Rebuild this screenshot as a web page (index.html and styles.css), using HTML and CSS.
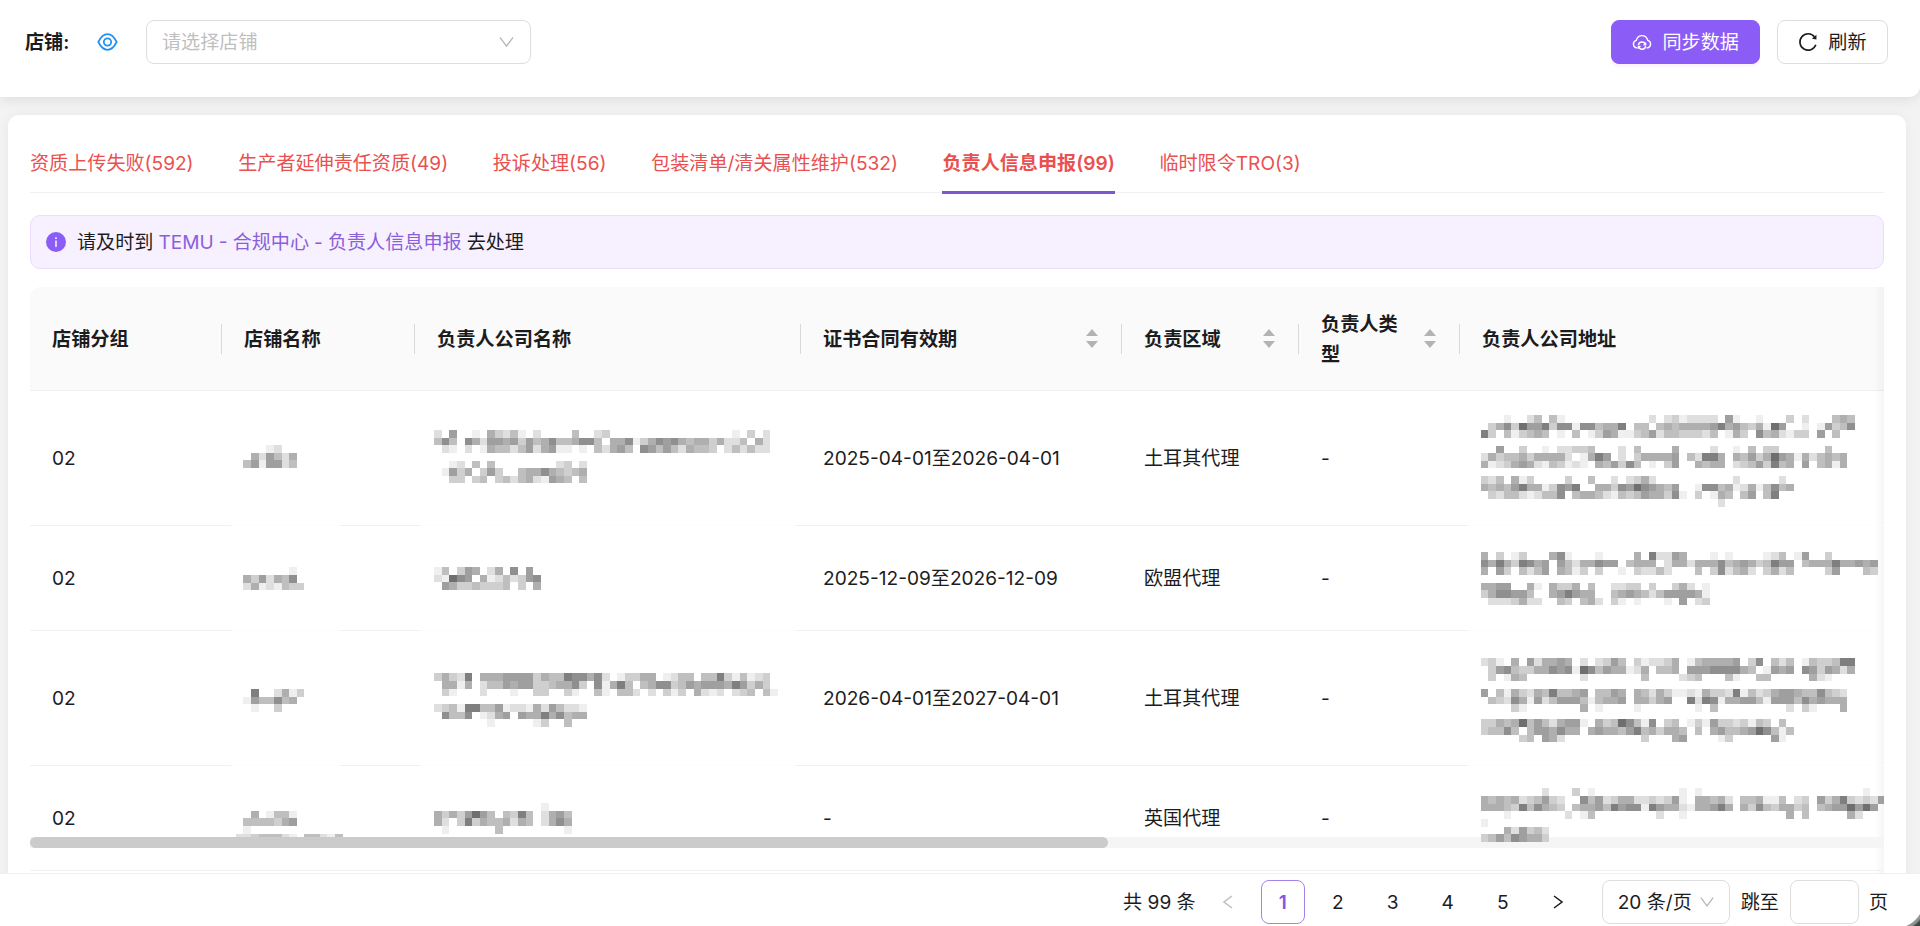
FILE: index.html
```html
<!DOCTYPE html>
<html lang="zh-CN">
<head>
    <meta charset="utf-8">
    <title>负责人信息申报</title>
    <link rel="stylesheet" href="styles.css">
</head>
<body>
    <div class="filter-bar">
        <label class="filter-label">店铺:</label>
        <svg class="eye" viewBox="0 0 24 24"><path d="M2 12C4.400 7.200 7.600 3.500 12 3.500S19.600 7.200 22 12C19.600 16.800 16.400 20.500 12 20.500S4.400 16.800 2 12Z"/><circle cx="12" cy="12" r="4"/></svg>
        <div class="select shop-select">
            <span>请选择店铺</span>
            <svg class="chevron" viewBox="0 0 16 12"><path d="M1 1l7 9.500L15 1"/></svg>
        </div>
        <div class="actions">
            <button class="btn btn-primary">
                <svg viewBox="0 0 22 20"><path d="M6 16.500H5.200A4.200 4.200 0 0 1 4.600 8.300C5.600 4.900 8 3 11 3s5.400 1.900 6.400 5.300a4.200 4.200 0 0 1-.6 8.200H16"/><path d="M7 13.500a4 4 0 0 1 7.800-.6M15 14.500a4 4 0 0 1-7.800.6M15 10.500v2.600h-2.500M7 17.500v-2.600h2.500"/></svg>
                <span>同步数据</span>
            </button>
            <button class="btn">
                <svg viewBox="0 0 22 22"><path d="M18.200 5.400A9 9 0 1 0 19.600 14"/><path class="solid" d="M20.300 3v5.200l-5-.8z"/></svg>
                <span>刷新</span>
            </button>
        </div>
    </div>

    <div class="card">
        <div class="tabs">
            <div class="tab">资质上传失败(592)</div>
            <div class="tab">生产者延伸责任资质(49)</div>
            <div class="tab">投诉处理(56)</div>
            <div class="tab">包装清单/清关属性维护(532)</div>
            <div class="tab active">负责人信息申报(99)</div>
            <div class="tab">临时限令TRO(3)</div>
        </div>

        <div class="alert">
            <svg viewBox="0 0 20 20"><circle cx="10" cy="10" r="10"/><path d="M9.300 8.500h1.400v6.500H9.300zM9.200 5.200h1.600v1.700H9.200z"/></svg>
            <p>请及时到 <a>TEMU - 合规中心 - 负责人信息申报</a> 去处理</p>
        </div>

        <div class="table-wrap">
            <table>
                <colgroup>
                    <col class="w-group"><col class="w-shop"><col class="w-company"><col class="w-date"><col class="w-area"><col class="w-type"><col class="w-address">
                </colgroup>
                <thead>
                    <tr>
                        <th>店铺分组</th>
                        <th>店铺名称</th>
                        <th>负责人公司名称</th>
                        <th><div class="sortable"><span>证书合同有效期</span><i class="sorter"></i></div></th>
                        <th><div class="sortable"><span>负责区域</span><i class="sorter"></i></div></th>
                        <th><div class="sortable"><span>负责人类型</span><i class="sorter"></i></div></th>
                        <th>负责人公司地址</th>
                    </tr>
                </thead>
                <tbody>
                    <tr class="tall">
                        <td>02</td>
                        <td class="masked shop" data-mask="shop1"></td>
                        <td class="masked company" data-mask="company1"></td>
                        <td>2025-04-01至2026-04-01</td>
                        <td>土耳其代理</td>
                        <td>-</td>
                        <td class="masked address" data-mask="address1"></td>
                    </tr>
                    <tr>
                        <td>02</td>
                        <td class="masked shop" data-mask="shop2"></td>
                        <td class="masked company" data-mask="company2"></td>
                        <td>2025-12-09至2026-12-09</td>
                        <td>欧盟代理</td>
                        <td>-</td>
                        <td class="masked address" data-mask="address2"></td>
                    </tr>
                    <tr class="tall">
                        <td>02</td>
                        <td class="masked shop" data-mask="shop3"></td>
                        <td class="masked company" data-mask="company3"></td>
                        <td>2026-04-01至2027-04-01</td>
                        <td>土耳其代理</td>
                        <td>-</td>
                        <td class="masked address" data-mask="address3"></td>
                    </tr>
                    <tr class="last">
                        <td>02</td>
                        <td class="masked shop" data-mask="shop4"></td>
                        <td class="masked company" data-mask="company4"></td>
                        <td>-</td>
                        <td>英国代理</td>
                        <td>-</td>
                        <td class="masked address" data-mask="address4"></td>
                    </tr>
                </tbody>
            </table>
            <div class="scrollbar"><div class="thumb"></div></div>
        </div>
    </div>

    <div class="footer">
        <span class="total">共 99 条</span>
        <span class="page arrow disabled"><svg viewBox="0 0 10 14"><path d="M9 1L1 7l8 6"/></svg></span>
        <span class="page current">1</span>
        <span class="page">2</span>
        <span class="page">3</span>
        <span class="page">4</span>
        <span class="page">5</span>
        <span class="page arrow"><svg viewBox="0 0 10 14"><path d="M1 1l8 6-8 6"/></svg></span>
        <div class="select size-select">
            <span>20 条/页</span>
            <svg class="chevron" viewBox="0 0 16 12"><path d="M1 1l7 9.500L15 1"/></svg>
        </div>
        <span class="jump">跳至</span>
        <input class="jump-input" type="text">
        <span class="jump-end">页</span>
    </div>
    <div class="corner"></div>

    <script src="script.js"></script>
</body>
</html>
```
FILE: styles.css
```css
* {
    box-sizing: border-box;
}
body {
    margin: 0;
    height: 926px;
    overflow: hidden;
    position: relative;
    display: flex;
    flex-direction: column;
    background: #f3f3f3;
    color: #1c1c1e;
    font-family: Inter, "Noto Sans CJK SC", sans-serif;
    font-size: 19.1px;
    line-height: 30px;
}
svg {
    fill: none;
    stroke: currentColor;
    flex: none;
}
.filter-bar {
    flex: none;
    display: flex;
    align-items: flex-start;
    height: 97px;
    padding: 20px 32px 0 25px;
    background: #fff;
    border-radius: 0 0 11px 0;
    box-shadow: 0 2px 14px rgba(0, 0, 0, 0.1);
}
.filter-label {
    width: 71px;
    line-height: 44px;
    font-weight: 600;
}
.eye {
    width: 23px;
    height: 22px;
    margin: 11px 27px 0 0;
    color: #2490f0;
    stroke-width: 1.9;
}
.select {
    display: flex;
    align-items: center;
    justify-content: space-between;
    height: 44px;
    border: 1px solid #dedede;
    border-radius: 8px;
    background: #fff;
}
.shop-select {
    width: 385px;
    padding: 0 16px 0 15px;
    color: #bfbfbf;
}
.chevron {
    width: 15px;
    height: 12px;
    color: #b5b5b5;
    stroke-width: 1.4;
}
.actions {
    display: flex;
    gap: 17px;
    margin-left: auto;
}
.btn {
    display: flex;
    align-items: center;
    gap: 10px;
    height: 44px;
    padding: 0 20.5px;
    border: 1px solid #dedede;
    border-radius: 8px;
    background: #fff;
    color: inherit;
    font: inherit;
}
.btn svg {
    width: 20px;
    height: 20px;
    stroke-width: 1.8;
}
.btn .solid {
    fill: currentColor;
    stroke: none;
}
.btn-primary {
    padding: 0 20px;
    border-color: #8b5cf6;
    background: #8b5cf6;
    color: #fff;
    box-shadow: 0 3px 0 #fbf3ff;
}
.btn-primary svg {
    stroke-width: 1.5;
}

.card {
    flex: none;
    height: 811px;
    margin: 18px 14px 0 8px;
    padding: 17px 22px 0;
    background: #fff;
    border-radius: 11px;
    box-shadow: 0 0 12px rgba(0, 0, 0, 0.05);
}
.tabs {
    display: flex;
    gap: 44.6px;
    height: 61px;
    border-bottom: 1px solid #f1f1f1;
    color: #ea5050;
}
.tab {
    height: 62px;
    line-height: 62px;
    white-space: nowrap;
}
.tab.active {
    font-weight: 600;
    border-bottom: 3px solid #7f56d2;
}
.alert {
    display: flex;
    align-items: center;
    gap: 11px;
    height: 54px;
    margin-top: 22px;
    padding: 0 15px;
    background: #f6f0ff;
    border: 1px solid #eaddfd;
    border-radius: 10px;
}
.alert svg {
    width: 20px;
    height: 20px;
    stroke: none;
}
.alert circle {
    fill: #8b5cf6;
}
.alert path {
    fill: #fff;
}
.alert p {
    margin: 0;
    word-spacing: -0.3px;
}
.alert a {
    color: #8b5fdb;
}

.table-wrap {
    position: relative;
    height: 639px;
    margin-top: 18px;
    overflow: hidden;
    border-radius: 10px 0 0 0;
}
.table-wrap::after {
    content: "";
    position: absolute;
    top: 0;
    right: 0;
    bottom: 0;
    width: 10px;
    background: linear-gradient(to right, rgba(0, 0, 0, 0), rgba(0, 0, 0, 0.035));
}
table {
    width: 1854px;
    table-layout: fixed;
    border-collapse: separate;
    border-spacing: 0;
}
.w-group { width: 192px; }
.w-shop { width: 193px; }
.w-company { width: 386px; }
.w-date { width: 321px; }
.w-area { width: 177px; }
.w-type { width: 161px; }
th {
    height: 104px;
    padding: 0 22px;
    background: linear-gradient(#d9d9d9, #d9d9d9) right center / 1px 30px no-repeat #fafafa;
    border-bottom: 1px solid #efefef;
    text-align: left;
    font-size: 19.2px;
    font-weight: 600;
}
th:last-child {
    background: #fafafa;
}
.sortable {
    display: flex;
    align-items: center;
    justify-content: space-between;
}
.sortable span {
    max-width: 150px;
}
th:nth-child(6) span {
    width: 80px;
}
.sorter {
    display: flex;
    flex-direction: column;
    gap: 5px;
    margin-right: 2px;
}
.sorter::before,
.sorter::after {
    content: "";
    border: 6px solid transparent;
}
.sorter::before {
    border-top: 0;
    border-bottom: 7px solid #b3b3b3;
}
.sorter::after {
    border-bottom: 0;
    border-top: 7px solid #b3b3b3;
}
td {
    height: 105px;
    padding: 0 22px;
    border-bottom: 1px solid #f1f1f1;
}
.tall td {
    height: 135px;
}
/* the row line fades out under masked values */
td.masked {
    position: relative;
    padding: 0;
    border-bottom: 1px solid transparent;
    border-image: linear-gradient(to right, #f1f1f1 9px, #fcfcfc 9px) 1;
    vertical-align: top;
}
td.shop {
    border-image: linear-gradient(to right, #f1f1f1 10px, #fcfcfc 10px, #fcfcfc 118px, #f1f1f1 118px) 1;
}
td.company {
    border-image: linear-gradient(to right, #f1f1f1 7px, #fcfcfc 7px, #fcfcfc 379px, #f1f1f1 379px) 1;
}
.last td.masked {
    border-image: none;
    border-color: #f1f1f1;
}
td.address {
    z-index: 3;
}
.mask {
    display: block;
    width: 100%;
    height: 104px;
    overflow: visible;
    stroke: none;
    shape-rendering: crispEdges;
}
.scrollbar {
    position: absolute;
    left: 0;
    right: 0;
    top: 550px;
    z-index: 2;
    height: 11px;
    background: #f5f5f5;
}
.thumb {
    width: 1078px;
    height: 11px;
    border-radius: 6px;
    background: #cbcbcb;
}

.footer {
    position: fixed;
    left: 0;
    right: 0;
    bottom: 0;
    z-index: 5;
    display: flex;
    align-items: flex-start;
    height: 53px;
    padding: 6px 32px 0 0;
    justify-content: flex-end;
    background: #fff;
    border-top: 1px solid #efefef;
    line-height: 44px;
    white-space: nowrap;
}
.page {
    width: 44px;
    height: 44px;
    margin-right: 11px;
    text-align: center;
}
.total {
    margin-right: 10px;
}
.page.current {
    border: 1px solid #a583e6;
    border-radius: 8px;
    color: #8455e0;
    font-weight: 600;
    line-height: 42px;
}
.page.arrow {
    display: flex;
    align-items: center;
    justify-content: center;
}
.arrow svg {
    width: 10px;
    height: 14px;
    stroke-width: 1.5;
}
.page.disabled {
    color: #bfbfbf;
}
.size-select {
    width: 128px;
    margin: 0 11px 0 11px;
    padding: 0 15px;
}
.size-select .chevron {
    width: 14px;
}
.jump-input {
    width: 69px;
    height: 44px;
    margin: 0 10px 0 11px;
    border: 1px solid #dedede;
    border-radius: 8px;
}
.corner {
    position: fixed;
    right: 0;
    bottom: 0;
    z-index: 6;
    width: 18px;
    height: 22px;
    background: radial-gradient(circle at -8px -6px, transparent 30px, #999 31px, #8a8f8f 33px, #3c4444 35px);
}
```
FILE: script.js
```js
// Masked values: every digit is one block, 0 = empty, 9 = darkest
const CELL = 7.64;

const masks = {
    shop1: { x: 21.3, y: 54, rows: ['0001200', '0526425', '4616624'] },
    shop2: { x: 21.3, y: 41.3, rows: ['0000001', '5362547', '25121433'] },
    shop3: { x: 21.3, y: 58, rows: ['08002513', '1644745', '01003'] },
    shop4: { x: 13.7, y: 44.7, rows: ['00501441', '04444356', '01', '22344421044214'] },
    company1: { x: 19, y: 39, rows: [
        '20600105324102000040023000000000000000010302',
        '47407526656364574457740557135767545535224052',
        '02102015442462561101042564076464254430242422',
        '',
        '00120404000000002302',
        '01635036300455754345',
        '00330340342452165404'
    ] },
    company2: { x: 19, y: 41, rows: ['14036502507060', '21976051242367', '06533433340305'] },
    company3: { x: 19, y: 42.3, rows: [
        '35328055566663544877572013355012440448314123',
        '05515024465663345573071584045773465666586353',
        '031000200010033003100410442020313052120234041',
        '',
        '23418844612215264221',
        '07447012560655857455',
        '00000001000001300400'
    ] },
    company4: { x: 19, y: 37, rows: ['000000000000001', '535369640438402564', '520383544525402575', '010000004000000001'] },
    address1: { x: 20.7, y: 24, rows: [
        '0001002404100000000000202312222061001000302000454',
        '0357396683771774558044045455556856435196001016347',
        '83041345401040136511346244333240153074521330604',
        '',
        '0060030010223340002040000500002001040330000004',
        '253445355552015860203555560428850546359651524545',
        '512356521431210546374010360054550234638450604515',
        '',
        '3240513000030040020235200000000002000002',
        '54546855137680055376976546001774512514745',
        '032442124470455421434655371030154046048',
        '00000000000000000000000000000002'
    ] },
    address2: { x: 20.7, y: 26, rows: [
        '5030130005710001000050822650001010000124016003',
        '7585387560642557660455502552555745653486604555855656',
        '5063042460541303001032242000403724520352400003600043',
        '',
        '556600510533504002233030035201',
        '357766400568655004565424666651',
        '022235220043045203101000106023'
    ] },
    address3: { x: 20.7, y: 27.3, rows: [
        '2310506255650202364031223501455556037042401433488',
        '0367433557671974655125044506667777540165607636525',
        '0301540000000200000004000023400041004400000521',
        '',
        '604153254844560446505425311215332814235665447432',
        '043275162466641455605535600828715566416664756555',
        '000031000000050100001000000010400000000020310005',
        '',
        '3354594642566105349741703401316332314304',
        '34474046657550565546845355404056445697414',
        '0000034065200000000003000560000130000061'
    ] },
    address4: { x: 20.7, y: 22.3, rows: [
        '000000002000301000000000001010000000000000000000001',
        '54545234632007462355223236105545204451140230635832326',
        '5554384754304556486771865521556850537435534045669696',
        '0001000000020140000000020010000000000000504000005200',
        '1',
        '000526342',
        '346476553'
    ] }
};

document.querySelectorAll('[data-mask]').forEach(cell => {
    const mask = masks[cell.dataset.mask];
    let rects = '';
    mask.rows.forEach((row, r) => {
        [...row].forEach((digit, c) => {
            if (digit === '0') return;
            const gray = 255 - digit * 16;
            rects += `<rect x="${c * CELL + mask.x}" y="${r * CELL + mask.y}" width="${CELL}" height="${CELL}" fill="rgb(${gray},${gray},${gray})"/>`;
        });
    });
    cell.innerHTML = `<svg class="mask">${rects}</svg>`;
});
```
